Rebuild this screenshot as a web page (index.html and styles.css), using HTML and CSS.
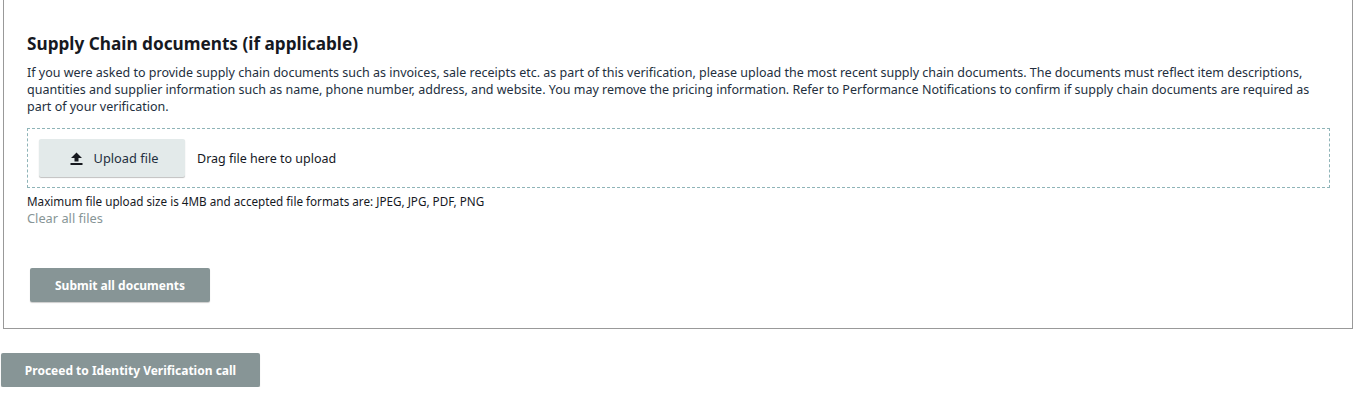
FILE: index.html
```html
<!DOCTYPE html>
<html lang="en">
<head>
<meta charset="utf-8">
<title>Supply Chain documents</title>
<link rel="stylesheet" href="styles.css">
</head>
<body>
<section class="panel">
  <h2 class="title">Supply Chain documents (if applicable)</h2>
  <p class="desc">If you were asked to provide supply chain documents such as invoices, sale receipts etc. as part of this verification, please upload the most recent supply chain documents. The documents must reflect item descriptions, quantities and supplier information such as name, phone number, address, and website. You may remove the pricing information. Refer to Performance Notifications to confirm if supply chain documents are required as part of your verification.</p>
  <div class="dropzone">
    <button class="upload-btn" type="button">
      <svg class="upload-icon" width="13" height="13" viewBox="0 0 13 13" aria-hidden="true">
        <path d="M6.5 0.5 L12 6 H8.5 V9.5 H4.5 V6 H1 Z" fill="#16191f"/>
        <rect x="0.5" y="11" width="12" height="2" fill="#16191f"/>
      </svg>
      <span>Upload file</span>
    </button>
    <span class="drag-text">Drag file here to upload</span>
  </div>
  <p class="hint">Maximum file upload size is 4MB and accepted file formats are: JPEG, JPG, PDF, PNG</p>
  <a class="clear-link">Clear all files</a>
  <div class="submit-row">
    <button class="btn-primary" type="button">Submit all documents</button>
  </div>
</section>
<div class="proceed-row">
  <button class="btn-primary btn-proceed" type="button">Proceed to Identity Verification call</button>
</div>
</body>
</html>
```

FILE: styles.css
```css
html, body {
  margin: 0;
  padding: 0;
  background: #ffffff;
}

body {
  font-family: "Noto Sans", "Open Sans", sans-serif;
  color: #16191f;
}

.panel {
  margin-left: 3px;
  width: 1350px;
  box-sizing: border-box;
  border: 1px solid #999999;
  border-top: none;
  padding: 33px 23px 26px 23px;
}

.title {
  margin: 0;
  font-size: 17.2px;
  line-height: 22px;
  font-weight: 700;
  color: #16191f;
}

.desc {
  margin: 8px 0 0 0;
  padding-top: 1px;
  font-size: 12.5px;
  line-height: 17px;
  color: #232f3e;
}

.dropzone {
  margin-top: 13px;
  width: 1303px;
  box-sizing: border-box;
  height: 60px;
  border: 1px dashed #8fb4b8;
  padding: 10px 11px;
  display: flex;
  align-items: center;
  gap: 12px;
}

.upload-btn {
  width: 146px;
  height: 38px;
  border: none;
  border-radius: 2px;
  background: #e3eaea;
  box-shadow: 0 1px 1px rgba(0, 0, 0, 0.25);
  display: flex;
  align-items: center;
  justify-content: center;
  gap: 11px;
  font-family: inherit;
  font-size: 12.8px;
  color: #232f3e;
  padding: 0 0 0 4px;
}

.upload-icon {
  display: block;
}

.drag-text {
  font-size: 12.5px;
  color: #16191f;
}

.hint {
  margin: 6px 0 0 0;
  font-size: 11.7px;
  line-height: 15px;
  color: #16191f;
}

.clear-link {
  display: block;
  font-size: 12.8px;
  line-height: 18px;
  color: #879596;
}

.submit-row {
  margin-top: 41px;
  padding-left: 3px;
}

.btn-primary {
  height: 34px;
  border: none;
  border-radius: 2px;
  background: #879596;
  color: #ffffff;
  font-family: inherit;
  font-size: 12px;
  font-weight: 700;
  white-space: nowrap;
  box-shadow: 0 1px 1px rgba(0, 0, 0, 0.2);
  padding: 0;
  width: 180px;
}

.proceed-row {
  margin-top: 24px;
  padding-left: 1px;
}

.btn-proceed {
  width: 259px;
}
```
